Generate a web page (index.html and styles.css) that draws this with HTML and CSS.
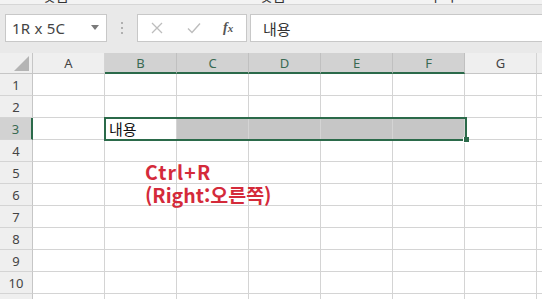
FILE: index.html
```html
<!DOCTYPE html>
<html lang="ko">
<head>
<meta charset="utf-8">
<link rel="stylesheet" href="styles.css">
</head>
<body>
<div class="ribbon"><span class="rb r1">맞춤</span><span class="rb r2">맞춤</span><span class="rb r3">서 식</span></div>
<div class="fbar">
  <div class="namebox"><span>1R x 5C</span><svg class="dd" width="8" height="5" viewBox="0 0 8 5"><path d="M0 0H8L4 5Z" fill="#7a7a7a"/></svg></div>
  <div class="dots"><i></i><i></i><i></i></div>
  <div class="fxbox">
    <svg width="12" height="12" viewBox="0 0 12 12"><path d="M1 1L11 11M11 1L1 11" stroke="#bdbdbd" stroke-width="1.3"/></svg>
    <svg width="14" height="12" viewBox="0 0 14 12"><path d="M1 6.5L5 10.5L13 1.5" stroke="#bdbdbd" stroke-width="1.4" fill="none"/></svg>
    <span class="fx"><i>f</i><i class="x">x</i></span>
  </div>
  <div class="formula">내용</div>
</div>
<div class="sheet">
  <div class="grid">
    <div class="ch corner"><svg width="15" height="15" viewBox="0 0 15 15"><path d="M15 0V15H0Z" fill="#b4b4b4"/></svg></div>
    <div class="ch">A</div><div class="ch sel">B</div><div class="ch sel">C</div><div class="ch sel">D</div><div class="ch sel">E</div><div class="ch sel">F</div><div class="ch">G</div><div class="ch">H</div>

    <div class="rh">1</div><div class="c"></div><div class="c"></div><div class="c"></div><div class="c"></div><div class="c"></div><div class="c"></div><div class="c"></div><div class="c"></div>
    <div class="rh">2</div><div class="c"></div><div class="c"></div><div class="c"></div><div class="c"></div><div class="c"></div><div class="c"></div><div class="c"></div><div class="c"></div>
    <div class="rh selr">3</div><div class="c"></div><div class="c txt">내용</div><div class="c g"></div><div class="c g"></div><div class="c g"></div><div class="c g"></div><div class="c"></div><div class="c"></div>
    <div class="rh">4</div><div class="c"></div><div class="c"></div><div class="c"></div><div class="c"></div><div class="c"></div><div class="c"></div><div class="c"></div><div class="c"></div>
    <div class="rh">5</div><div class="c"></div><div class="c"></div><div class="c"></div><div class="c"></div><div class="c"></div><div class="c"></div><div class="c"></div><div class="c"></div>
    <div class="rh">6</div><div class="c"></div><div class="c"></div><div class="c"></div><div class="c"></div><div class="c"></div><div class="c"></div><div class="c"></div><div class="c"></div>
    <div class="rh">7</div><div class="c"></div><div class="c"></div><div class="c"></div><div class="c"></div><div class="c"></div><div class="c"></div><div class="c"></div><div class="c"></div>
    <div class="rh">8</div><div class="c"></div><div class="c"></div><div class="c"></div><div class="c"></div><div class="c"></div><div class="c"></div><div class="c"></div><div class="c"></div>
    <div class="rh">9</div><div class="c"></div><div class="c"></div><div class="c"></div><div class="c"></div><div class="c"></div><div class="c"></div><div class="c"></div><div class="c"></div>
    <div class="rh">10</div><div class="c"></div><div class="c"></div><div class="c"></div><div class="c"></div><div class="c"></div><div class="c"></div><div class="c"></div><div class="c"></div>
    <div class="rh">11</div><div class="c"></div><div class="c"></div><div class="c"></div><div class="c"></div><div class="c"></div><div class="c"></div><div class="c"></div><div class="c"></div>
  </div>
  <div class="selbox"></div>
  <div class="handle"></div>
  <div class="note"><span class="l1">Ctrl+R</span><span class="l2">(Right:오른쪽)</span></div>
</div>
</body>
</html>
```

FILE: styles.css
```css
* { box-sizing: border-box; }
html, body { margin: 0; padding: 0; }
body {
  width: 542px;
  height: 299px;
  overflow: hidden;
  background: #fff;
  font-family: "Noto Sans", "Noto Sans CJK KR", sans-serif;
}
.ribbon {
  height: 5px;
  background: #f3f3f3;
  border-bottom: 1px solid #d6d6d6;
  overflow: hidden;
  position: relative;
}
.rb {
  position: absolute;
  top: -13px;
  font-size: 14px;
  line-height: 16px;
  color: #333;
  font-family: "Noto Sans CJK KR", sans-serif;
}
.r1 { left: 43px; }
.r2 { left: 260px; }
.r3 { left: 425px; }
.fbar {
  height: 48px;
  background: #e9e9e9;
  display: flex;
  align-items: flex-start;
  padding-top: 9px;
}
.namebox {
  margin-left: 5px;
  width: 102px;
  height: 28px;
  background: #fff;
  border: 1px solid #c8c8c8;
  display: flex;
  align-items: center;
  justify-content: space-between;
  padding: 0 7px 0 6px;
  font-size: 15px;
  color: #444;
}
.namebox span { letter-spacing: 0.2px; }
.dd { margin-top: -2px; }
.dots {
  width: 30px;
  height: 28px;
  display: flex;
  flex-direction: column;
  align-items: center;
  justify-content: center;
  gap: 3px;
}
.dots i {
  width: 2px;
  height: 2px;
  background: #b0b0b0;
  display: block;
}
.fxbox {
  width: 110px;
  height: 28px;
  background: #fff;
  border: 1px solid #c8c8c8;
  display: flex;
  align-items: center;
  padding-left: 13px;
  gap: 24px;
}
.fx {
  font-family: "Liberation Serif", serif;
  font-style: italic;
  font-weight: bold;
  color: #555;
  font-size: 14px;
  margin-left: -2px;
}
.fx i { font-style: italic; }
.fx .x { font-size: 11px; }
.formula {
  margin-left: 3px;
  flex: 1;
  height: 28px;
  background: #fff;
  border: 1px solid #c8c8c8;
  border-right: none;
  display: flex;
  align-items: center;
  padding-left: 12px;
  font-size: 15px;
  color: #333;
  font-family: "Noto Sans CJK KR", sans-serif;
}
.sheet {
  position: relative;
  background: #e9e9e9;
}
.grid {
  display: grid;
  grid-template-columns: 33px repeat(8, 72px);
  grid-template-rows: 21px repeat(11, 22px);
  width: 542px;
  overflow: hidden;
  background: #fff;
}
.ch {
  background: #efefef;
  border-right: 1px solid #d4d4d4;
  border-bottom: 1px solid #c6c6c6;
  display: flex;
  align-items: center;
  justify-content: center;
  font-size: 13px;
  color: #444;
}
.ch.corner {
  justify-content: flex-end;
  align-items: flex-end;
  padding: 0 3px 2px 0;
  border-right: 1px solid #c6c6c6;
}
.ch.sel {
  background: #d2d2d2;
  color: #3a6a52;
  border-right: 1px solid #c0c0c0;
  border-bottom: 2px solid #2b6a4a;
}
.rh {
  background: #efefef;
  border-right: 1px solid #c6c6c6;
  border-bottom: 1px solid #d4d4d4;
  display: flex;
  align-items: center;
  justify-content: center;
  font-size: 13px;
  color: #444;
}
.rh.selr {
  background: #d2d2d2;
  border-right: 2px solid #2b6a4a;
  color: #3a6a52;
}
.c {
  border-right: 1px solid #d4d4d4;
  border-bottom: 1px solid #d4d4d4;
}
.c.g { background: #c6c6c6; }
.c.txt {
  display: flex;
  align-items: center;
  padding-left: 4px;
  font-size: 15px;
  color: #111;
  font-family: "Noto Sans CJK KR", sans-serif;
}
.selbox {
  position: absolute;
  left: 104px;
  top: 64px;
  width: 363px;
  height: 24px;
  border: 2px solid #2b6a4a;
  pointer-events: none;
}
.handle {
  position: absolute;
  left: 463px;
  top: 84px;
  width: 6px;
  height: 6px;
  background: #2b6a4a;
  border: 1px solid #fff;
  border-right: none;
  border-top: none;
}
.note {
  position: absolute;
  left: 145px;
  top: 107px;
  display: flex;
  flex-direction: column;
  font-family: "Noto Sans CJK KR", "Noto Sans", sans-serif;
  font-weight: bold;
  font-size: 19.5px;
  line-height: 23px;
  color: #d42a3a;
}
.note .l1 { letter-spacing: 1.1px; }
```
